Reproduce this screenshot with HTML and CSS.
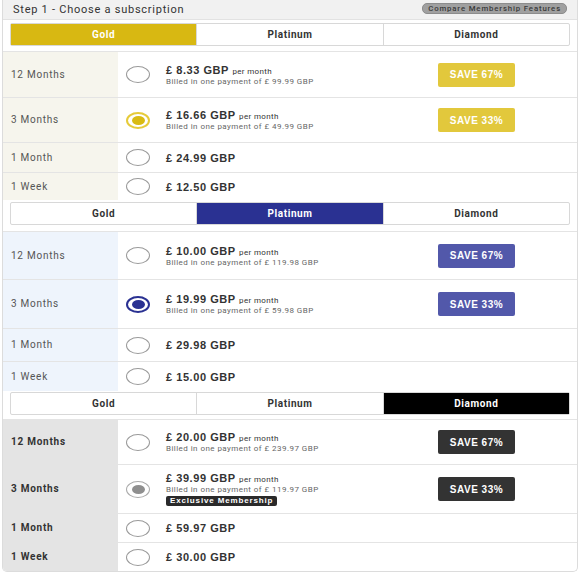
FILE: index.html
```html
<!DOCTYPE html>
<html>
<head>
<meta charset="utf-8">
<link rel="stylesheet" href="styles.css">
</head>
<body>
<div class="card">
  <div class="card-head">
    <span class="step">Step 1 - Choose a subscription</span>
    <span class="compare">Compare Membership Features</span>
  </div>

  <section class="plan plan-gold">
    <div class="tabs">
      <div class="tab active">Gold</div>
      <div class="tab">Platinum</div>
      <div class="tab">Diamond</div>
    </div>
    <div class="row">
      <div class="label">12 Months</div>
      <div class="opt">
        <span class="radio"></span>
        <div class="price"><div class="amount">£ 8.33 GBP <small>per month</small></div><div class="billed">Billed in one payment of £ 99.99 GBP</div></div>
        <span class="save">SAVE 67%</span>
      </div>
    </div>
    <div class="row">
      <div class="label">3 Months</div>
      <div class="opt">
        <span class="radio checked"></span>
        <div class="price"><div class="amount">£ 16.66 GBP <small>per month</small></div><div class="billed">Billed in one payment of £ 49.99 GBP</div></div>
        <span class="save">SAVE 33%</span>
      </div>
    </div>
    <div class="row">
      <div class="label">1 Month</div>
      <div class="opt"><span class="radio"></span><div class="price"><div class="amount">£ 24.99 GBP</div></div></div>
    </div>
    <div class="row">
      <div class="label">1 Week</div>
      <div class="opt"><span class="radio"></span><div class="price"><div class="amount">£ 12.50 GBP</div></div></div>
    </div>
  </section>

  <section class="plan plan-platinum">
    <div class="tabs">
      <div class="tab">Gold</div>
      <div class="tab active">Platinum</div>
      <div class="tab">Diamond</div>
    </div>
    <div class="row">
      <div class="label">12 Months</div>
      <div class="opt">
        <span class="radio"></span>
        <div class="price"><div class="amount">£ 10.00 GBP <small>per month</small></div><div class="billed">Billed in one payment of £ 119.98 GBP</div></div>
        <span class="save">SAVE 67%</span>
      </div>
    </div>
    <div class="row">
      <div class="label">3 Months</div>
      <div class="opt">
        <span class="radio checked"></span>
        <div class="price"><div class="amount">£ 19.99 GBP <small>per month</small></div><div class="billed">Billed in one payment of £ 59.98 GBP</div></div>
        <span class="save">SAVE 33%</span>
      </div>
    </div>
    <div class="row">
      <div class="label">1 Month</div>
      <div class="opt"><span class="radio"></span><div class="price"><div class="amount">£ 29.98 GBP</div></div></div>
    </div>
    <div class="row">
      <div class="label">1 Week</div>
      <div class="opt"><span class="radio"></span><div class="price"><div class="amount">£ 15.00 GBP</div></div></div>
    </div>
  </section>

  <section class="plan plan-diamond">
    <div class="tabs">
      <div class="tab">Gold</div>
      <div class="tab">Platinum</div>
      <div class="tab active">Diamond</div>
    </div>
    <div class="row">
      <div class="label">12 Months</div>
      <div class="opt">
        <span class="radio"></span>
        <div class="price"><div class="amount">£ 20.00 GBP <small>per month</small></div><div class="billed">Billed in one payment of £ 239.97 GBP</div></div>
        <span class="save">SAVE 67%</span>
      </div>
    </div>
    <div class="row">
      <div class="label">3 Months</div>
      <div class="opt">
        <span class="radio checked"></span>
        <div class="price"><div class="amount">£ 39.99 GBP <small>per month</small></div><div class="billed">Billed in one payment of £ 119.97 GBP</div><div class="badge">Exclusive Membership</div></div>
        <span class="save">SAVE 33%</span>
      </div>
    </div>
    <div class="row">
      <div class="label">1 Month</div>
      <div class="opt"><span class="radio"></span><div class="price"><div class="amount">£ 59.97 GBP</div></div></div>
    </div>
    <div class="row">
      <div class="label">1 Week</div>
      <div class="opt"><span class="radio"></span><div class="price"><div class="amount">£ 30.00 GBP</div></div></div>
    </div>
  </section>
</div>
</body>
</html>
```

FILE: styles.css
```css
* { box-sizing: border-box; }
html, body { margin: 0; padding: 0; background: #fff; }
body {
  font-family: Roboto, "Liberation Sans", Arial, sans-serif;
  color: #333;
  width: 580px;
}
.card {
  margin: 0 2px 0 2px;
  border: 1px solid #dcdcdc;
  border-top: none;
  border-radius: 0 0 5px 5px;
  overflow: hidden;
}
.card-head {
  height: 20px;
  background: #f1f1f1;
  border-bottom: 1px solid #e2e2e2;
  display: flex;
  align-items: center;
  justify-content: space-between;
  padding: 0 10px 0 10px;
}
.step {
  font-size: 11px;
  letter-spacing: 0.75px;
  color: #333;
}
.compare {
  background: #a0a0a0;
  color: #3a3a3a;
  font-size: 7.8px;
  font-weight: 500;
  letter-spacing: 0.85px;
  border-radius: 5px;
  padding: 0 5px;
  line-height: 9px;
  border: 1px solid #8c8c8c;
  margin-top: -2px;
}
.tabs {
  display: flex;
  margin: 3px 7px 5px 7px;
  border: 1px solid #d8d8d8;
  border-radius: 2px;
  height: 23px;
  background: #fff;
}
.plan-platinum .tabs { margin: 2px 7px 6px 7px; }
.plan-diamond .tabs { margin: 1px 7px 4px 7px; }
.tab {
  flex: 1;
  display: flex;
  align-items: center;
  justify-content: center;
  font-size: 10px;
  font-weight: 700;
  letter-spacing: 0.6px;
  color: #333;
}
.tab + .tab { border-left: 1px solid #d8d8d8; }
.plan-gold .tab.active { background: #d8b812; color: #fff; }
.plan-platinum .tab.active { background: #2a3192; color: #fff; }
.plan-diamond .tab.active { background: #000; color: #fff; }

.row {
  display: grid;
  grid-template-columns: 115px 1fr;
  border-top: 1px solid #e4e4e4;
  height: 29px;
}
.plan-gold .row:nth-child(2) { height: 46px; }
.plan-gold .row:nth-child(3) { height: 45px; }
.plan-gold .row:nth-child(4) { height: 30px; }
.plan-gold .row:nth-child(5) { height: 28px; }
.plan-platinum .row:nth-child(2) { height: 48px; }
.plan-platinum .row:nth-child(3) { height: 49px; }
.plan-platinum .row:nth-child(4) { height: 33px; }
.plan-platinum .row:nth-child(5) { height: 30px; }
.plan-diamond .row:nth-child(2) { height: 45px; }
.plan-diamond .row:nth-child(3) { height: 49px; }
.plan-diamond .row:nth-child(4) { height: 29px; }
.plan-diamond .row:nth-child(5) { height: 29px; }

.label {
  display: flex;
  align-items: center;
  padding-left: 8px;
  padding-bottom: 1px;
  font-size: 10px;
  letter-spacing: 0.75px;
  color: #555;
}
.plan-gold .label { background: #f6f5ed; }
.plan-platinum .label { background: #eef4fc; }
.plan-diamond .label { background: #e4e4e4; font-weight: 700; color: #333; }

.opt {
  display: flex;
  align-items: center;
  padding-left: 8px;
}

.radio {
  width: 24px;
  height: 17px;
  border-radius: 50%;
  border: 1px solid #9a9a9a;
  background: #fff;
  flex: none;
  display: flex;
  align-items: center;
  justify-content: center;
}
.radio.checked::after {
  content: "";
  width: 13px;
  height: 9px;
  border-radius: 50%;
}
.plan-gold .radio.checked { border: 2px solid #e6cb3a; }
.plan-gold .radio.checked::after { background: #d9bb13; }
.plan-platinum .radio.checked { border: 2px solid #2a3192; }
.plan-platinum .radio.checked::after { background: #2a3192; }
.plan-diamond .radio.checked { border: 1px solid #aaa; }
.plan-diamond .radio.checked::after { background: #8f8f8f; }

.price {
  width: 272px;
  margin-left: 16px;
  flex: none;
}
.amount {
  font-family: "Liberation Sans", Arial, sans-serif;
  font-size: 11px;
  font-weight: 700;
  letter-spacing: 0.55px;
  color: #333;
}
.amount small {
  font-family: Roboto, sans-serif;
  font-size: 8px;
  letter-spacing: 0.35px;
  font-weight: 400;
}
.billed {
  font-size: 8px;
  letter-spacing: 0.45px;
  color: #666;
  margin-top: 1px;
}
.badge {
  width: fit-content;
  margin-top: 2px;
  background: #2a2a2a;
  color: #fff;
  font-family: "Liberation Sans", Arial, sans-serif;
  font-size: 8px;
  font-weight: 700;
  letter-spacing: 0.85px;
  padding: 0 4px;
  border-radius: 2px;
  line-height: 10px;
}
.save {
  width: 77px;
  height: 24px;
  display: flex;
  align-items: center;
  justify-content: center;
  font-family: "Liberation Sans", Arial, sans-serif;
  font-size: 10px;
  font-weight: 700;
  letter-spacing: 0.5px;
  color: #fff;
  border-radius: 2px;
  flex: none;
}
.plan-gold .save { background: #e2c83c; }
.plan-platinum .save { background: #5258aa; }
.plan-diamond .save { background: #333; }
```
